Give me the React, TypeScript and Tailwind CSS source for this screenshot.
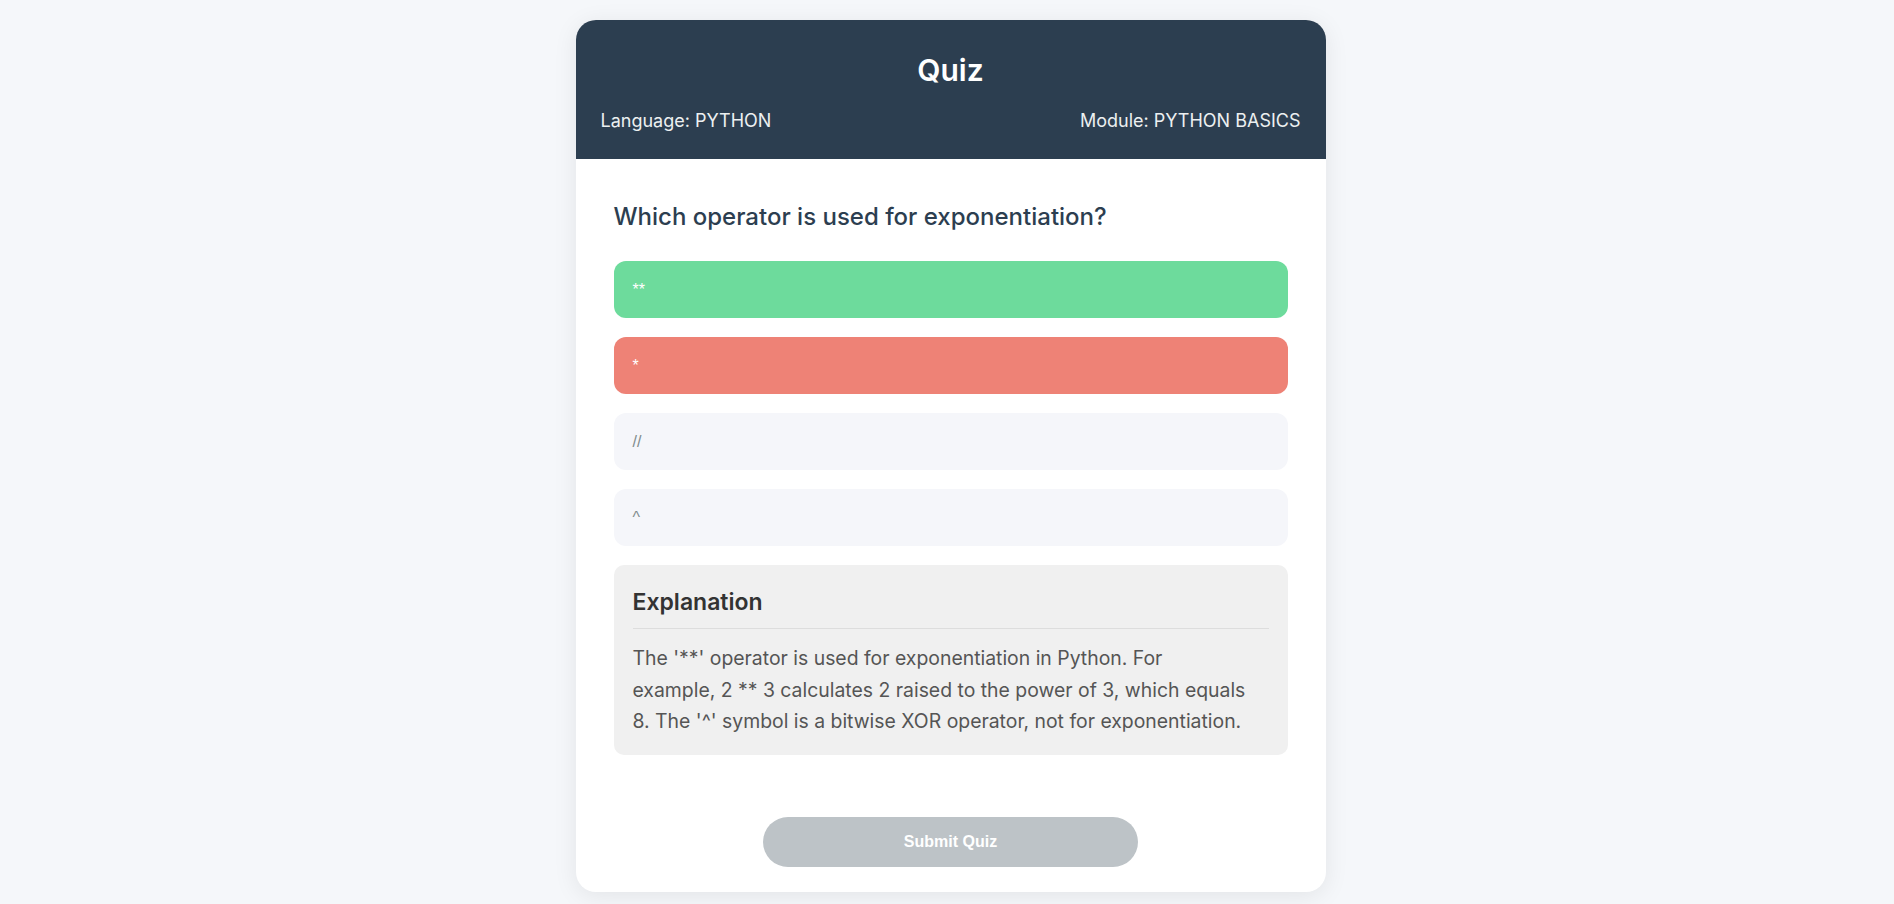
export default function App() {
  const options = [
    { label: "**", state: "correct" },
    { label: "*", state: "wrong" },
    { label: "//", state: "idle" },
    { label: "^", state: "idle" },
  ]

  return (
    <div className="min-h-screen bg-[#f5f7fa] pt-[20px] pb-[20px] pl-[7px] font-['Inter',sans-serif]">
      <div className="mx-auto w-[750px] overflow-hidden rounded-[20px] bg-white shadow-[0_4px_24px_rgba(0,0,0,0.08)]">
        {/* Header */}
        <div className="bg-[#2c3e50] px-[25px] pt-[33px] pb-[28px] text-white">
          <h1 className="text-center text-[30px] font-semibold leading-[35px]">Quiz</h1>
          <div className="mt-[22px] flex justify-between text-[18px] leading-[21px] text-[#ecf0f1]">
            <span>Language: PYTHON</span>
            <span>Module: PYTHON BASICS</span>
          </div>
        </div>

        {/* Body */}
        <div className="px-[38px] pt-[44px] pb-[25px]">
          <h2 className="text-[24px] font-medium leading-[27px] text-[#2c3e50]">
            Which operator is used for exponentiation?
          </h2>

          <div className="mt-[31px] flex flex-col gap-[19px]">
            {options.map((o) => (
              <button
                key={o.label}
                className={
                  "h-[57px] w-full rounded-xl px-[19px] text-left font-['Liberation_Sans',Arial,sans-serif] text-base " +
                  (o.state === "correct"
                    ? "bg-[#6ddb9c] text-white"
                    : o.state === "wrong"
                    ? "bg-[#ee8276] text-white"
                    : "bg-[#f5f6fa] text-[#7f8c8d]")
                }
              >
                {o.label}
              </button>
            ))}
          </div>

          {/* Explanation */}
          <div className="mt-[19px] rounded-[10px] bg-[#f0f0f0] px-[19px] pt-[19px] pb-[17px]">
            <h3 className="border-b border-[#dddddd] pb-[7px] text-[23px] font-semibold leading-[37px] text-[#333333]">
              Explanation
            </h3>
            <p className="mt-[14px] text-[19.4px] leading-[31.7px] text-[#555555]">
              The '**' operator is used for exponentiation in Python. For
              <br />
              example, 2 ** 3 calculates 2 raised to the power of 3, which equals
              <br />
              8. The '^' symbol is a bitwise XOR operator, not for exponentiation.
            </p>
          </div>

          <div className="mt-[62px] flex justify-center">
            <button className="h-[50px] w-[375px] rounded-full bg-[#bdc3c7] font-['Liberation_Sans',Arial,sans-serif] text-base font-bold text-white">
              Submit Quiz
            </button>
          </div>
        </div>
      </div>
    </div>
  )
}
